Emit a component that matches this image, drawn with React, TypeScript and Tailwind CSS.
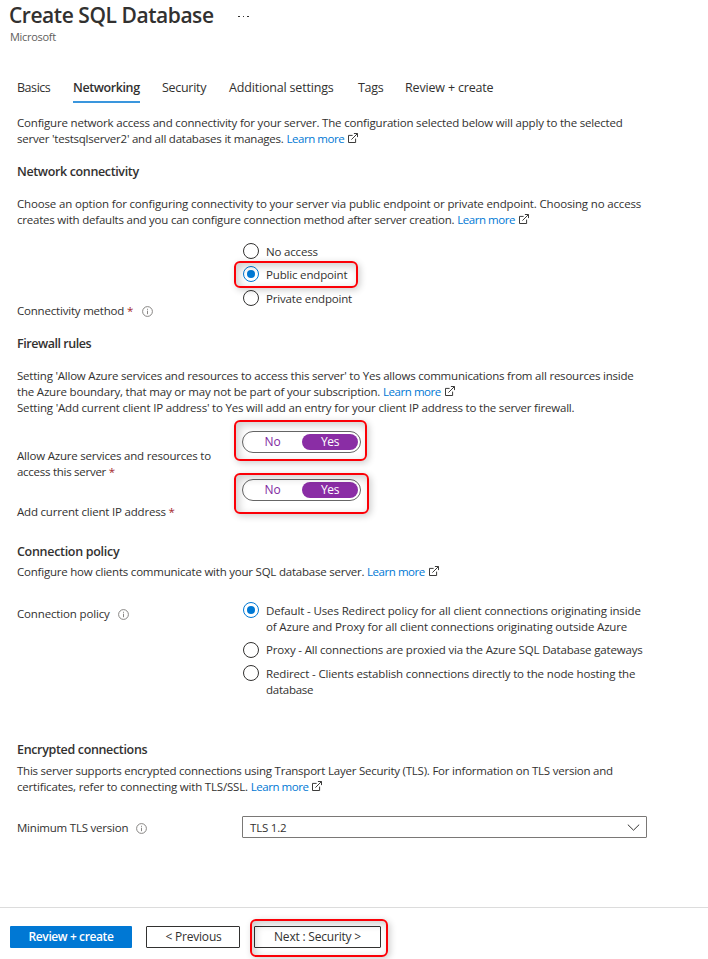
import type { ReactNode } from "react";

function ExternalIcon() {
  return (
    <svg className="mb-[2px] ml-[4px] inline-block h-[10px] w-[10px] shrink-0" viewBox="0 0 10 10" fill="none" stroke="#323130" strokeWidth=".95">
      <path d="M4.6 2.4H.5v7.1h7.1V5.6" />
      <path d="M3.4 6.6 9.3.7M5.9.5h3.6v3.6" />
    </svg>
  );
}

function InfoIcon() {
  return (
    <svg className="h-[11px] w-[11px]" viewBox="0 0 11 11" fill="none" stroke="#7a7876">
      <circle cx="5.5" cy="5.5" r="4.9" strokeWidth=".9" />
      <path d="M5.5 4.7v3.5M5.5 2.8v1" strokeWidth=".9" />
    </svg>
  );
}

function Line({ children, className = "tracking-[-0.19px]" }: { children: ReactNode; className?: string }) {
  return (
    <div className="flex h-4 items-center whitespace-nowrap">
      <span className={className}>{children}</span>
    </div>
  );
}

function LinkLine({ children, className = "tracking-[-0.22px]" }: { children: ReactNode; className?: string }) {
  return (
    <div className="flex h-4 items-center whitespace-nowrap">
      <span className={className}>
        {children} <a className="tracking-[-0.45px] text-[#0078d4]">Learn more</a>
      </span>
      <ExternalIcon />
    </div>
  );
}

function Heading({ children, className = "" }: { children: ReactNode; className?: string }) {
  return <h2 className={`flex h-4 items-center whitespace-nowrap text-[12.5px] font-semibold ${className}`}>{children}</h2>;
}

function Radio({ checked = false }: { checked?: boolean }) {
  return checked ? (
    <span className="flex size-4 shrink-0 items-center justify-center rounded-full border border-[#0078d4]">
      <span className="size-2 rounded-full bg-[#0078d4]" />
    </span>
  ) : (
    <span className="size-4 shrink-0 rounded-full border border-[#323130]" />
  );
}

function Callout({ className = "" }: { className?: string }) {
  return (
    <span
      className={`pointer-events-none absolute rounded-[6px] border-2 border-[#fb0007] shadow-[2px_2px_7px_rgba(0,0,0,0.2),inset_3px_3px_8px_rgba(0,0,0,0.2)] ${className}`}
    />
  );
}

function Toggle() {
  return (
    <div className="flex h-[22px] w-[119px] items-center rounded-full border border-[#666] p-[2px]">
      <span className="w-[57px] pr-[2px] text-center text-[12px] tracking-[-0.2px] text-[#8028a0]">No</span>
      <span className="flex h-4 flex-1 items-center justify-center rounded-full bg-[#8a2da5] text-[12px] tracking-[-0.4px] text-white">Yes</span>
    </div>
  );
}

const star = <span className="text-[#a4262c]">*</span>;

export default function App() {
  return (
    <div className="flex h-[959px] w-[708px] flex-col overflow-hidden bg-white font-['Open_Sans','Noto_Sans',sans-serif] text-[11.5px] leading-4 text-[#323130]">
      <header className="h-20 pl-[10px]">
        <div className="flex h-[30px] items-center">
          <h1 className="-ml-px w-[229px] whitespace-nowrap text-[21px] leading-[30px] font-semibold tracking-[-0.45px]">Create SQL Database</h1>
          <span className="mt-[3px] flex gap-[3px]">
            <i className="size-[1.5px] bg-[#323130]" />
            <i className="size-[1.5px] bg-[#323130]" />
            <i className="size-[1.5px] bg-[#323130]" />
          </span>
        </div>
        <p className="-mt-px -ml-px text-[11px] leading-[15px] tracking-[-0.3px] text-[#605e5c]">
          <span className="pl-px">Microsoft</span>
        </p>
      </header>

      <nav className="flex h-[23px] pl-[17px] text-[12.5px] whitespace-nowrap">
        <span className="w-[56px] tracking-[-0.45px]">Basics</span>
        <span className="mr-[22px] w-[67px] border-b-2 border-[#3a96dd] font-semibold tracking-[-0.4px]">Networking</span>
        <span className="w-[67px] tracking-[-0.3px]">Security</span>
        <span className="w-[129px] tracking-[-0.18px]">Additional settings</span>
        <span className="w-[47px] tracking-[-0.3px]">Tags</span>
        <span className="tracking-[-0.17px]">Review + create</span>
      </nav>

      <main className="h-[804px] pt-3 pl-[17px]">
        <Line>Configure network access and connectivity for your server. The configuration selected below will apply to the selected</Line>
        <LinkLine>server 'testsqlserver2' and all databases it manages.</LinkLine>

        <Heading className="mt-[17px] tracking-[-0.36px]">Network connectivity</Heading>
        <div className="mt-4">
          <Line className="tracking-[-0.16px]">Choose an option for configuring connectivity to your server via public endpoint or private endpoint. Choosing no access</Line>
          <LinkLine>creates with defaults and you can configure connection method after server creation.</LinkLine>
        </div>

        <div className="mt-[15px] flex h-[76px]">
          <div className="flex w-[226px] items-end">
            <span className="tracking-[-0.2px]">Connectivity method {star}</span>
            <span className="mb-[2px] ml-[9px]"><InfoIcon /></span>
          </div>
          <div className="relative tracking-[-0.17px]">
            <div className="flex h-[23px] items-start gap-[7px]"><Radio /><span className="pt-px">No access</span></div>
            <div className="flex h-6 items-start gap-[7px]"><Radio checked /><span className="pt-px">Public endpoint</span></div>
            <div className="flex items-start gap-[7px]"><Radio /><span className="pt-px">Private endpoint</span></div>
            <Callout className="top-[18px] left-[-9px] h-[27px] w-[124px]" />
          </div>
        </div>

        <Heading className="mt-[17px] tracking-[-0.46px]">Firewall rules</Heading>
        <div className="mt-4">
          <Line className="tracking-[-0.215px]">Setting 'Allow Azure services and resources to access this server' to Yes allows communications from all resources inside</Line>
          <LinkLine className="tracking-[-0.19px]">the Azure boundary, that may or may not be part of your subscription.</LinkLine>
          <Line>Setting 'Add current client IP address' to Yes will add an entry for your client IP address to the server firewall.</Line>
        </div>

        <div className="mt-[15px] flex h-12">
          <div className="w-[225px] pt-[17px]">
            <Line className="tracking-[-0.21px]">Allow Azure services and resources to</Line>
            <Line className="tracking-[-0.27px]">access this server {star}</Line>
          </div>
          <div className="relative">
            <Toggle />
            <Callout className="top-[-11px] left-[-8px] h-[41px] w-[133px]" />
          </div>
        </div>
        <div className="flex h-[41px]">
          <div className="w-[225px] pt-[25px]">
            <Line className="tracking-[-0.2px]">Add current client IP address {star}</Line>
          </div>
          <div className="relative">
            <Toggle />
            <Callout className="top-[-6px] left-[-8px] h-[41px] w-[135px]" />
          </div>
        </div>

        <Heading className="mt-6 tracking-[-0.3px]">Connection policy</Heading>
        <div className="mt-1">
          <LinkLine>Configure how clients communicate with your SQL database server.</LinkLine>
        </div>

        <div className="mt-[22px] flex h-[139px]">
          <div className="flex w-[226px] items-start pt-1">
            <span className="tracking-[-0.15px]">Connection policy</span>
            <span className="mt-[3px] ml-2"><InfoIcon /></span>
          </div>
          <div>
            <div className="flex h-10 gap-[7px]">
              <Radio checked />
              <div className="pt-px">
                <Line className="tracking-[-0.13px]">Default - Uses Redirect policy for all client connections originating inside</Line>
                <Line className="tracking-[-0.155px]">of Azure and Proxy for all client connections originating outside Azure</Line>
              </div>
            </div>
            <div className="flex h-[23px] gap-[7px]">
              <Radio />
              <Line className="tracking-[-0.17px]">Proxy - All connections are proxied via the Azure SQL Database gateways</Line>
            </div>
            <div className="flex gap-[7px]">
              <Radio />
              <div className="pt-px">
                <Line className="tracking-[-0.14px]">Redirect - Clients establish connections directly to the node hosting the</Line>
                <Line className="tracking-[-0.25px]">database</Line>
              </div>
            </div>
          </div>
        </div>

        <Heading className="relative top-px tracking-[-0.34px]">Encrypted connections</Heading>
        <div className="mt-[6px]">
          <Line className="tracking-[-0.23px]">This server supports encrypted connections using Transport Layer Security (TLS). For information on TLS version and</Line>
          <LinkLine className="tracking-[-0.19px]">certificates, refer to connecting with TLS/SSL.</LinkLine>
        </div>

        <div className="mt-[21px] flex h-[22px]">
          <div className="flex w-[225px] items-start pt-1">
            <span className="tracking-[-0.22px]">Minimum TLS version</span>
            <span className="mt-[3px] ml-2"><InfoIcon /></span>
          </div>
          <div className="flex w-[405px] items-center justify-between rounded-[1px] border border-[#7a7876] pr-[6px] pl-[7px]">
            <span className="pt-px tracking-[-0.2px]">TLS 1.2</span>
            <svg className="h-[7px] w-[13px]" viewBox="0 0 13 7" fill="none" stroke="#323130">
              <path d="m.8.6 5.7 5.6L12.2.6" />
            </svg>
          </div>
        </div>
      </main>

      <footer className="flex h-[52px] border-t border-[#dcdcdc] pt-[18px] pl-[10px] text-[12px]">
        <button className="h-[22px] w-[122px] rounded-[1px] bg-[#0078d4] font-semibold tracking-[-0.4px] text-white">Review + create</button>
        <button className="ml-[14px] h-[22px] w-[94px] rounded-[1px] border border-[#323130] pl-px tracking-[-0.2px]">&lt; Previous</button>
        <div className="relative ml-[14px] h-[22px]">
          <button className="h-[22px] w-[127px] rounded-[1px] border border-[#323130] tracking-[-0.2px]">Next : Security &gt;</button>
          <Callout className="top-[-7px] left-[-4px] h-[38px] w-[138px]" />
        </div>
      </footer>
    </div>
  );
}
